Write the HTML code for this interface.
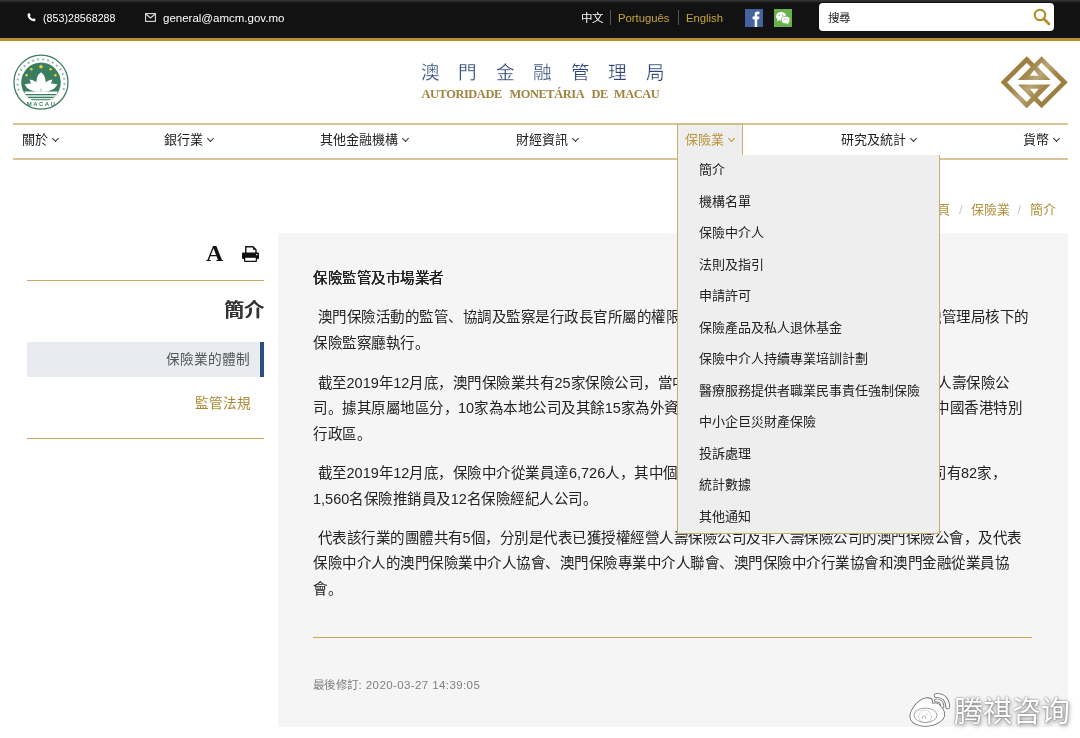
<!DOCTYPE html>
<html lang="zh-CN"><head><meta charset="utf-8">
<style>
*{margin:0;padding:0;box-sizing:border-box}
html,body{width:1080px;height:738px;overflow:hidden;background:#fff;will-change:transform;font-family:"Liberation Sans",sans-serif;color:#222}
div,span{white-space:pre}
.a{position:absolute}
#top{position:absolute;left:0;top:0;width:1080px;height:41px;background:linear-gradient(#3a3a3a 0,#121212 3px,#121212 38px,#b39030 38px,#b39030 41px)}
.t{position:absolute;color:#fff;line-height:14px}
.lang{position:absolute;top:10px;font-size:11.3px;line-height:16px}
.sep{position:absolute;top:10px;width:1px;height:15px;background:#555}
#search{position:absolute;left:819px;top:3px;width:235px;height:28px;background:#fff;border-radius:4px}
#nav{position:absolute;left:13px;top:123px;width:1055px;height:37px;border-top:2px solid #d8c496;border-bottom:2px solid #d8c496}
.ni{position:absolute;top:131px;font-size:13px;line-height:18px;color:#222}
.chev{display:inline-block;width:5px;height:5px;border-right:1.1px solid #333;border-bottom:1.1px solid #333;transform:rotate(45deg);margin-left:5px;position:relative;top:-3px}
#dd{position:absolute;left:677px;top:155px;width:263px;height:379px;background:#eee;border:1px solid #c9ad6a;border-top:none}
#tab{position:absolute;left:677px;top:123px;width:66px;height:35px;background:#eee;border:1px solid #c9ad6a;border-top:2px solid #d3bd88;border-bottom:none}
.di{position:absolute;left:699px;font-size:13px;line-height:18px;color:#222}
#content{position:absolute;left:278px;top:233px;width:790px;height:494px;background:#f5f5f5}
.p{position:absolute;font-size:14.5px;line-height:20px;color:#222;letter-spacing:0.5px}
.ti{position:absolute;top:86px;font-family:'Liberation Serif',serif;font-weight:bold;font-size:12.4px;line-height:16px;color:#a0833f;letter-spacing:-0.42px}
.n{letter-spacing:0}
.bc{position:absolute;top:201px;font-size:13px;line-height:18px;color:#b0913e}
.bcs{position:absolute;top:201px;font-size:13px;line-height:18px;color:#c8c8c8}
</style></head>
<body>
<div id="top">
  <svg class="a" style="left:27px;top:13px" width="9" height="8.6" viewBox="0 0 10 10"><path d="M1.2 0.6 L3 0.3 L4 2.6 L3 3.6 Q4 5.8 6.3 7 L7.3 6 L9.6 7 L9.3 8.9 Q8.6 9.7 7.5 9.6 Q4.6 9.2 2.4 6.9 Q0.4 4.7 0.3 2 Q0.4 1 1.2 0.6Z" fill="#fff"/></svg>
  <div class="t" style="left:43px;top:11px;font-size:10.7px">(853)28568288</div>
  <svg class="a" style="left:145px;top:13px" width="11" height="9" viewBox="0 0 11 9"><rect x="0.6" y="0.6" width="9.8" height="7.8" fill="none" stroke="#ddd" stroke-width="1.1"/><path d="M0.8 1 L5.5 5 L10.2 1" fill="none" stroke="#ddd" stroke-width="1.1"/></svg>
  <div class="t" style="left:163px;top:11px;font-size:11.5px">general@amcm.gov.mo</div>
  <div class="lang" style="left:580.5px;color:#fff;font-size:11.5px;top:9.5px">中文</div>
  <div class="sep" style="left:610px"></div>
  <div class="lang" style="left:618px;color:#c9a53c">Português</div>
  <div class="sep" style="left:678px"></div>
  <div class="lang" style="left:686px;color:#c9a53c">English</div>
  <svg class="a" style="left:744.8px;top:9px" width="18" height="18" viewBox="0 0 19 18" preserveAspectRatio="none"><rect width="19" height="18" fill="#4461a0"/><path d="M10.2 18 V10.2 H8 V7.4 H10.2 V5.4 Q10.2 2.6 13 2.6 H15.2 V5.3 H13.7 Q12.9 5.3 12.9 6.1 V7.4 H15.2 L14.9 10.2 H12.9 V18Z" fill="#fff"/></svg>
  <svg class="a" style="left:773.5px;top:9px" width="18" height="18" viewBox="0 0 19 18" preserveAspectRatio="none"><rect width="19" height="18" fill="#6ab04c"/><ellipse cx="7.5" cy="7.2" rx="5.3" ry="4.3" fill="#fff"/><path d="M4 10 L3.3 12.5 L6.3 10.8Z" fill="#fff"/><ellipse cx="12.3" cy="11" rx="4.6" ry="3.7" fill="#fff" stroke="#6ab04c" stroke-width="0.8"/><path d="M14.8 13.8 L15.6 15.6 L13 14.4Z" fill="#fff"/><circle cx="5.7" cy="6.2" r="0.7" fill="#6ab04c"/><circle cx="9.2" cy="6.2" r="0.7" fill="#6ab04c"/><circle cx="10.8" cy="10.4" r="0.6" fill="#6ab04c"/><circle cx="13.8" cy="10.4" r="0.6" fill="#6ab04c"/></svg>
  <div id="search"><span class="a" style="left:9px;top:6.5px;font-size:11.5px;line-height:16px;color:#222">搜尋</span>
    <svg class="a" style="left:214px;top:5px" width="18" height="18" viewBox="0 0 18 18"><circle cx="7" cy="7" r="5.2" fill="none" stroke="#b39030" stroke-width="2.2"/><path d="M10.8 10.8 L16 16" stroke="#b39030" stroke-width="2.8" stroke-linecap="round"/></svg>
  </div>
</div>

<!-- Macau emblem -->
<svg class="a" style="left:13px;top:54px" width="56" height="56" viewBox="0 0 56 56">
  <circle cx="28" cy="28.2" r="27" fill="#fff" stroke="#3b7d5f" stroke-width="1.3"/>
  <path d="M5.8 36.5 A23.5 23.5 0 1 1 50.2 36.5" fill="none" stroke="#95b8a8" stroke-width="2" stroke-dasharray="1.9 3.2"/>
  <clipPath id="ic"><path d="M8 0 H48 V46.3 H8Z"/></clipPath>
  <g clip-path="url(#ic)">
    <circle cx="28" cy="28.4" r="19.8" fill="#3b7d5f"/>
  </g>
  <path d="M11.5 37.6 L44.5 37.6 L43.8 40 L12.2 40Z" fill="#fff"/>
  <path d="M12.5 41.2 L43.5 41.2 L42.8 42.8 L13.2 42.8Z" fill="#e9f1ed"/>
  <path d="M14 44 L42 44 L41.4 45.2 L14.6 45.2Z" fill="#dfe9e4"/>
  <path d="M28 18.2 Q33.8 22 32.6 33.5 L23.4 33.5 Q22.2 22 28 18.2Z" fill="#fff"/>
  <path d="M11.6 30.5 Q20 27.5 28 33 Q36 27.5 44.4 30.5 Q41 37.8 28 38 Q15 37.8 11.6 30.5Z" fill="#fff"/>
  <path d="M16.5 25.5 Q23.5 26 27 33.5 L19.5 33.5Z M39.5 25.5 Q32.5 26 29 33.5 L36.5 33.5Z" fill="#fff"/>
  <path d="M28 34.6 L28 38" stroke="#3b7d5f" stroke-width="0.5"/>
  <path d="M28 10.2 l0.75 1.6 1.75 0.15 -1.35 1.15 0.45 1.75 -1.6-0.95 -1.6 0.95 0.45-1.75 -1.35-1.15 1.75-0.15Z" fill="#f3d43c"/>
  <circle cx="18.4" cy="15.2" r="1.25" fill="#f1d33b"/><circle cx="37.6" cy="15.2" r="1.25" fill="#f1d33b"/>
  <circle cx="13.6" cy="21.3" r="1.25" fill="#f1d33b"/><circle cx="42.4" cy="21.3" r="1.25" fill="#f1d33b"/>
  <text x="28.6" y="51.6" font-family="Liberation Sans" font-weight="bold" font-size="6" fill="#3b7d5f" text-anchor="middle" letter-spacing="1.5">MACAU</text>
</svg>

<!-- Title -->
<div class="a" style="left:420.5px;top:62px;font-family:'Liberation Serif',serif;font-size:18.6px;line-height:22px;color:#2b4377;letter-spacing:18.5px;-webkit-text-stroke:0.25px #fff">澳門金融管理局</div>
<div class="ti" style="left:421.5px">AUTORIDADE</div><div class="ti" style="left:509.5px">MONETÁRIA</div><div class="ti" style="left:591.5px">DE</div><div class="ti" style="left:614px">MACAU</div>

<!-- AMCM logo -->
<svg class="a" style="left:998px;top:54px" width="72" height="58" viewBox="998 54 72 58">
  <defs><linearGradient id="gg" gradientUnits="userSpaceOnUse" x1="1008" y1="60" x2="1060" y2="104">
    <stop offset="0" stop-color="#97793a"/><stop offset="0.32" stop-color="#9f8446"/><stop offset="0.5" stop-color="#bba57a"/><stop offset="0.68" stop-color="#9f8446"/><stop offset="1" stop-color="#97793a"/>
  </linearGradient></defs>
  <g fill="none" stroke="url(#gg)" stroke-width="4.6" stroke-linejoin="miter">
    <polyline points="1034.2,67 1026.7,59.5 1003.9,82.3 1026.7,105.1 1034.2,97.6"/>
    <polyline points="1034.2,67 1041.6,59.5 1064.5,82.3 1041.6,105.1 1034.2,97.6"/>
  </g>
  <path fill="url(#gg)" fill-rule="evenodd" d="M1034.2 63.5 L1050.6 80 L1017.8 80Z M1034.2 70 L1038.6 75.7 L1029.8 75.7Z"/>
  <path fill="url(#gg)" fill-rule="evenodd" d="M1034.2 101 L1050.6 84.6 L1017.8 84.6Z M1034.2 94 L1038.6 88.8 L1029.8 88.8Z"/>
</svg>

<div id="nav"></div>
<div class="ni" style="left:22px">關於<span class="chev"></span></div>
<div class="ni" style="left:164px">銀行業<span class="chev"></span></div>
<div class="ni" style="left:320px">其他金融機構<span class="chev"></span></div>
<div class="ni" style="left:516px">財經資訊<span class="chev"></span></div>
<div class="ni" style="left:841px">研究及統計<span class="chev"></span></div>
<div class="ni" style="left:1023px">貨幣<span class="chev"></span></div>

<!-- breadcrumb -->
<div class="bc" style="left:924px">首頁</div>
<div class="bcs" style="left:959px">/</div>
<div class="bc" style="left:971px">保險業</div>
<div class="bcs" style="left:1017.5px">/</div>
<div class="bc" style="left:1030px">簡介</div>

<!-- sidebar -->
<div class="a" style="left:206px;top:240px;font-family:'Liberation Serif',serif;font-weight:bold;font-size:24px;line-height:26px;color:#111">A</div>
<svg class="a" style="left:242px;top:246px" width="17" height="16" viewBox="0 0 17 16">
  <path d="M3.8 7 V0.8 H11 L14 3.8 V7" fill="none" stroke="#111" stroke-width="1.4"/>
  <path d="M11 0.8 L14 3.8 H11Z" fill="#111"/>
  <rect x="0" y="6.6" width="17" height="6.4" rx="1" fill="#111"/>
  <rect x="2.6" y="11.2" width="11.8" height="4.1" rx="0.6" fill="#fff" stroke="#111" stroke-width="1.3"/>
  <rect x="14" y="8.2" width="1.6" height="1" fill="#fff"/>
</svg>
<div class="a" style="left:27px;top:280px;width:237px;height:1.3px;background:#c9a85a"></div>
<div class="a" style="left:224px;top:297px;font-size:19.5px;line-height:26px;color:#333;text-shadow:0.6px 0 0 #333,0 0.4px 0 #333">簡介</div>
<div class="a" style="left:27px;top:342px;width:237px;height:35px;background:#e8ebf0"></div>
<div class="a" style="left:259.5px;top:342px;width:4.5px;height:35px;background:#2b4f7e"></div>
<div class="a" style="left:166px;top:350px;font-size:13.7px;line-height:20px;color:#555">保險業的體制</div>
<div class="a" style="left:194.5px;top:394px;font-size:13.7px;line-height:20px;color:#ad8b35">監管法規</div>
<div class="a" style="left:27px;top:437.5px;width:237px;height:1.3px;background:#c9a85a"></div>

<!-- content -->
<div id="content"></div>
<div class="p" style="left:313px;top:268px;color:#222;text-shadow:0.45px 0 0 #222,0 0.3px 0 #222">保險監管及市場業者</div>
<div class="p" style="left:313px;top:307px"> 澳門保險活動的監管、協調及監察是行政長官所屬的權限，並已由行政長官授權</div>
<div class="p" style="left:927px;top:307px">融管理局核下的</div>
<div class="p" style="left:313px;top:333px">保險監察廳執行。</div>
<div class="p" style="left:313px;top:373px"> 截至<span class="n">2019</span>年<span class="n">12</span>月底，澳門保險業共有<span class="n">25</span>家保險公司，當中<span class="n">11</span>家為</div>
<div class="p" style="left:937px;top:373px">人壽保險公</div>
<div class="p" style="left:313px;top:398px">司。據其原屬地區分，<span class="n">10</span>家為本地公司及其餘<span class="n">15</span>家為外資公司，主要</div>
<div class="p" style="left:935px;top:398px">中國香港特別</div>
<div class="p" style="left:313px;top:424px">行政區。</div>
<div class="p" style="left:313px;top:463px"> 截至<span class="n">2019</span>年<span class="n">12</span>月底，保險中介從業員達<span class="n">6,726</span>人，其中個人保險代理人</div>
<div class="p" style="left:932px;top:463px">司有<span class="n">82</span>家，</div>
<div class="p" style="left:313px;top:489px"><span class="n">1,560</span>名保險推銷員及<span class="n">12</span>名保險經紀人公司。</div>
<div class="p" style="left:313px;top:528px"> 代表該行業的團體共有<span class="n">5</span>個，分別是代表已獲授權經營人壽保險公司及非人壽保險公司的澳門保險公會，及代表</div>
<div class="p" style="left:313px;top:553px">保險中介人的澳門保險業中介人協會、澳門保險專業中介人聯會、澳門保險中介行業協會和澳門金融從業員協</div>
<div class="p" style="left:313px;top:579px">會。</div>
<div class="a" style="left:313px;top:636.5px;width:719px;height:1.3px;background:#c9a85a"></div>
<div class="a" style="left:313px;top:677px;font-size:11.5px;line-height:16px;color:#7f7f7f;letter-spacing:0.4px">最後修訂: 2020-03-27 14:39:05</div>

<!-- dropdown -->
<div id="tab"></div>
<div class="ni" style="left:685px;color:#b8943c">保險業<span class="chev" style="border-color:#b8943c"></span></div>
<div id="dd"></div>
<div class="di" style="top:161px">簡介</div>
<div class="di" style="top:193px">機構名單</div>
<div class="di" style="top:224px">保險中介人</div>
<div class="di" style="top:256px">法則及指引</div>
<div class="di" style="top:287px">申請許可</div>
<div class="di" style="top:319px">保險產品及私人退休基金</div>
<div class="di" style="top:350px">保險中介人持續專業培訓計劃</div>
<div class="di" style="top:382px">醫療服務提供者職業民事責任強制保險</div>
<div class="di" style="top:413px">中小企巨災財產保險</div>
<div class="di" style="top:445px">投訴處理</div>
<div class="di" style="top:476px">統計數據</div>
<div class="di" style="top:508px">其他通知</div>

<!-- watermark -->
<svg class="a" style="left:908px;top:690px" width="46" height="40" viewBox="0 0 46 40">
  <defs><filter id="sh" x="-20%" y="-20%" width="140%" height="140%"><feGaussianBlur stdDeviation="0.5"/></filter></defs>
  <g filter="url(#sh)">
    <path d="M18 8.2 Q24 7.8 24.3 11.5 L24.5 14 Q27 12.8 29 13.5 Q33 15 36 22 Q38 30 26 34.5 Q17 37.5 8 34 Q1 30.5 2.5 24 Q4.5 17 11 11.5 Q14.5 8.5 18 8.2Z" fill="none" stroke="#666" stroke-width="1.6"/>
    <path d="M28 5.5 Q39 5 39.8 17" fill="none" stroke="#666" stroke-width="4.6" stroke-linecap="round"/>
    <path d="M28 10.5 Q34 10 34.5 16.5" fill="none" stroke="#666" stroke-width="3.6" stroke-linecap="round"/>
  </g>
  <path d="M18 8.2 Q24 7.8 24.3 11.5 L24.5 14 Q27 12.8 29 13.5 Q33 15 36 22 Q38 30 26 34.5 Q17 37.5 8 34 Q1 30.5 2.5 24 Q4.5 17 11 11.5 Q14.5 8.5 18 8.2Z" fill="#fff"/>
  <path d="M28 5.5 Q39 5 39.8 17" fill="none" stroke="#fff" stroke-width="3" stroke-linecap="round"/>
  <path d="M28 10.5 Q34 10 34.5 16.5" fill="none" stroke="#fff" stroke-width="2.2" stroke-linecap="round"/>
  <ellipse cx="17.5" cy="25.3" rx="11.5" ry="7.2" fill="none" stroke="#8a8a8a" stroke-width="0.8"/>
  <circle cx="17" cy="26.5" r="6.3" fill="none" stroke="#999" stroke-width="0.7" stroke-dasharray="1.2 0.8"/>
  <path d="M14.5 29 V26.5 Q16 25 17.5 26.5 V29 M18.5 25 L19.5 24" fill="none" stroke="#888" stroke-width="0.6"/>
</svg>
<div class="a" style="left:954px;top:695px;font-size:29px;line-height:34px;color:#fff;text-shadow:0 0 2px rgba(0,0,0,0.6),1px 2px 4px rgba(0,0,0,0.4)">腾祺咨询</div>
</body></html>
